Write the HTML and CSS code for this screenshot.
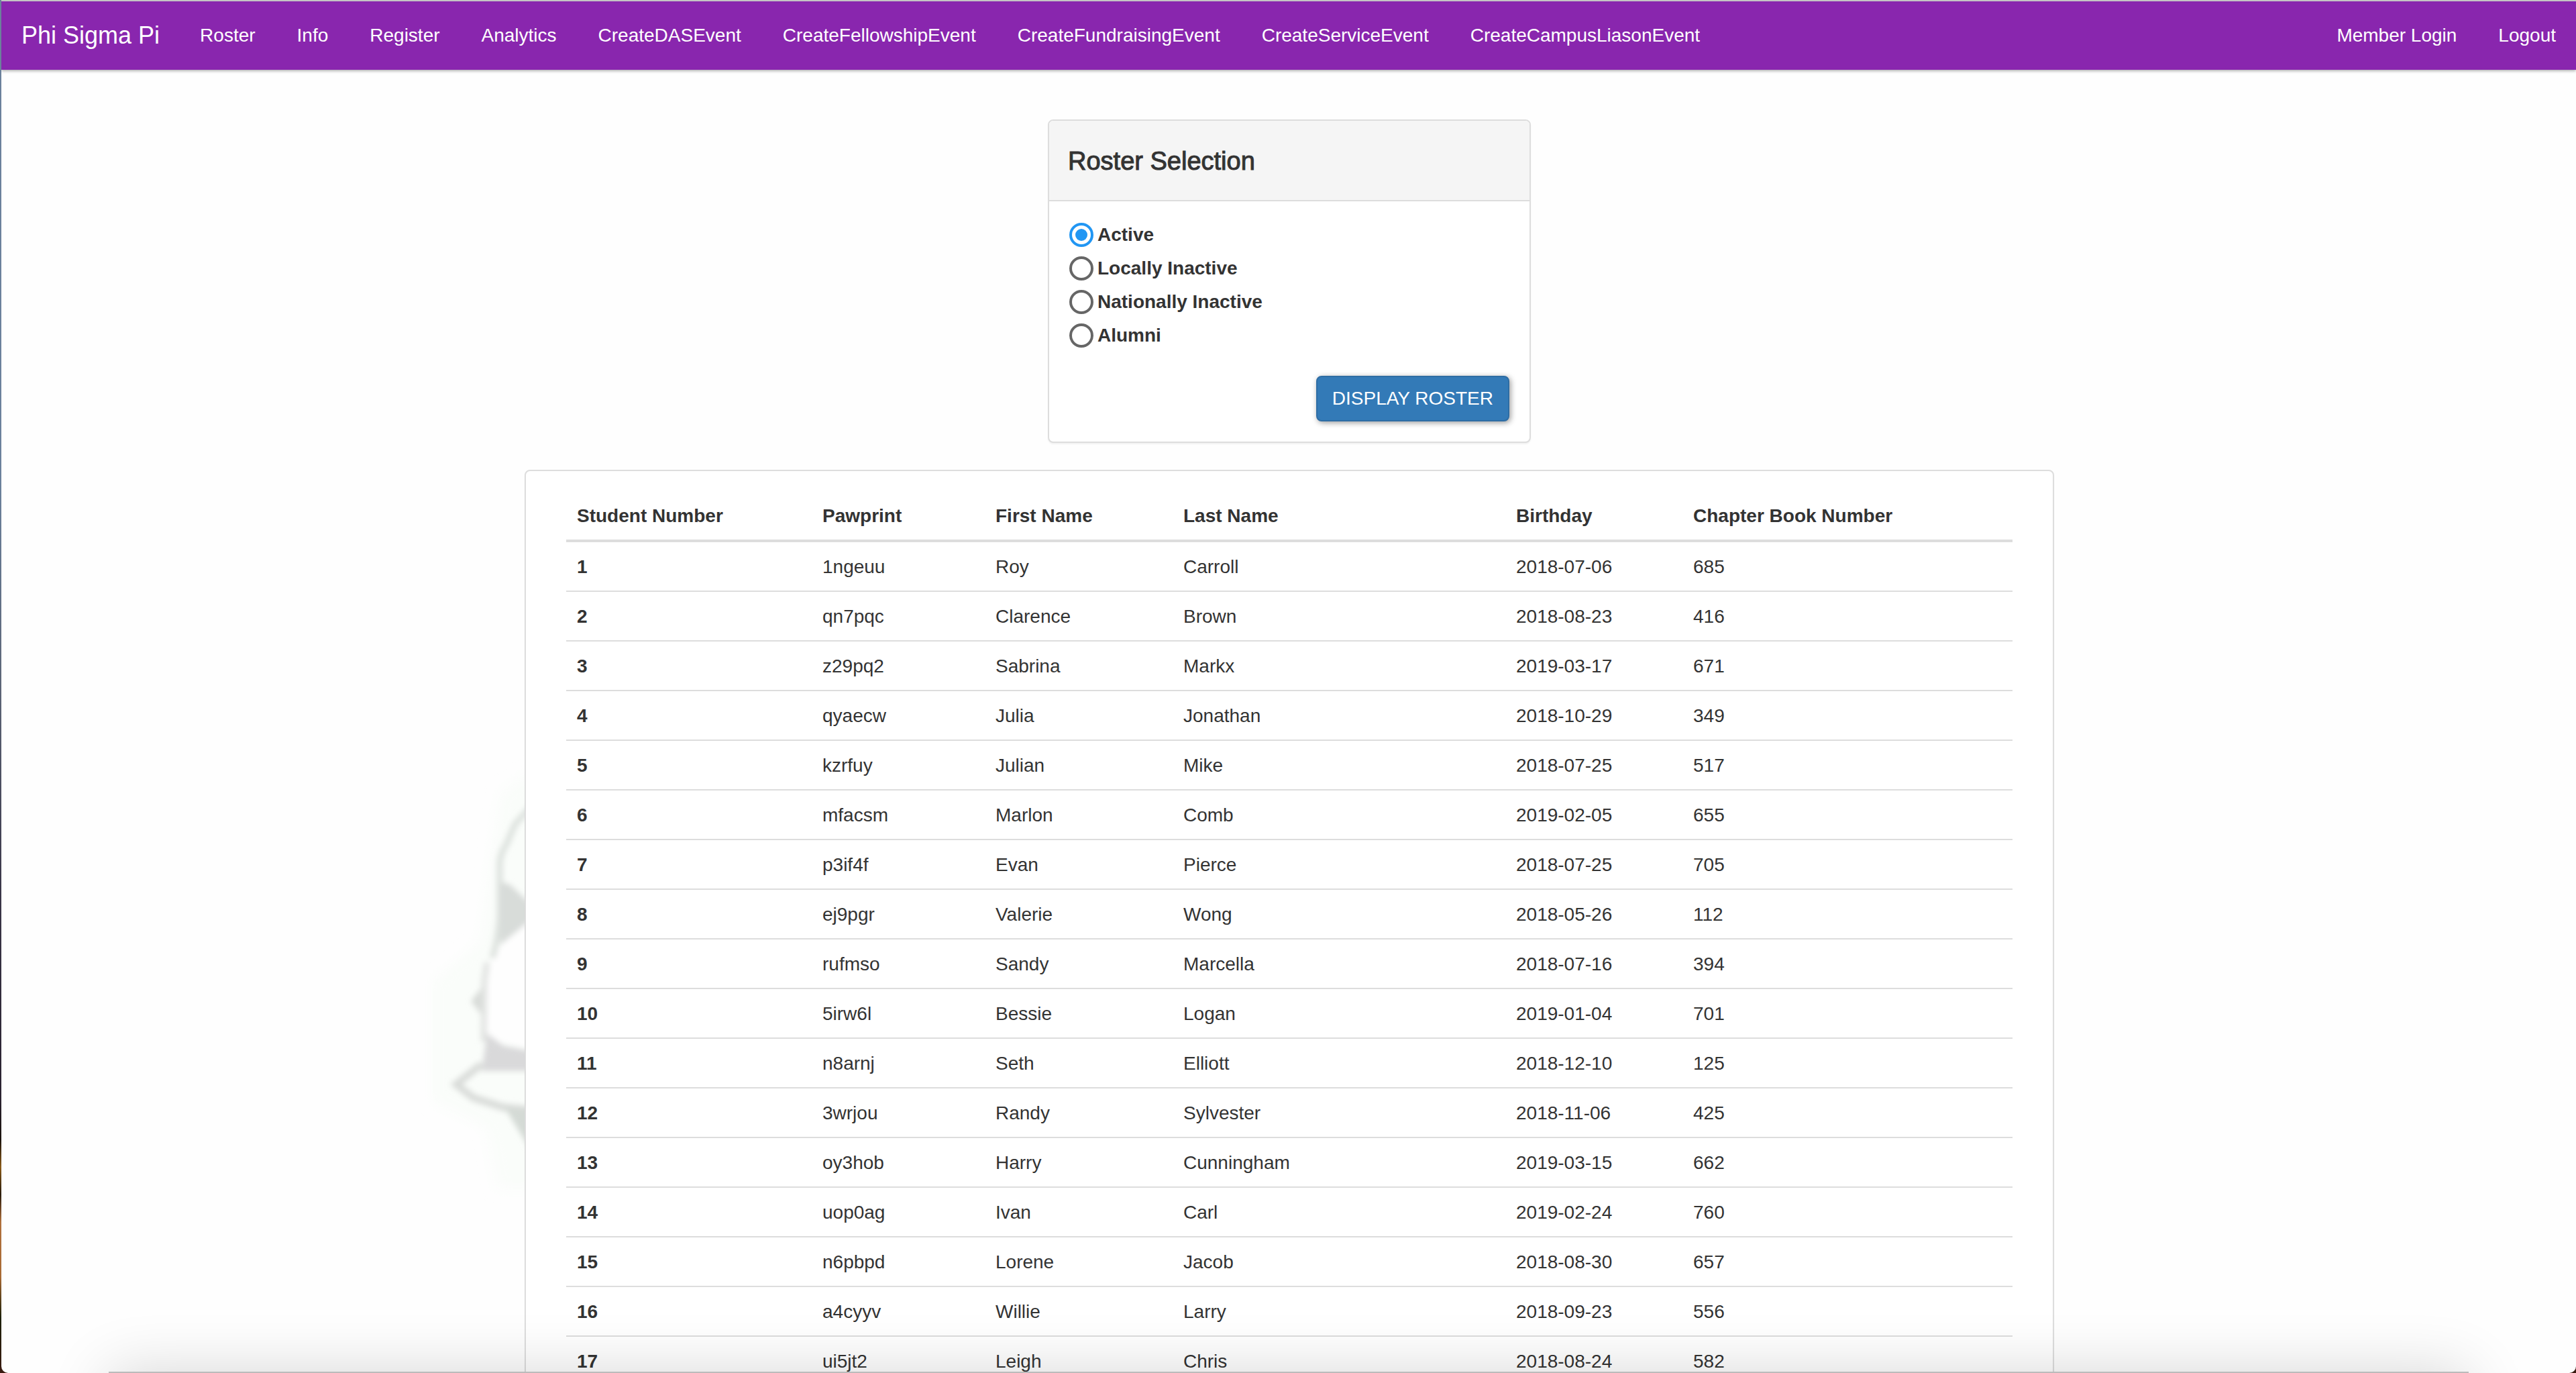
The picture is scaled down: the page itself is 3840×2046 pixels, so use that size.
FILE: index.html
```html
<!DOCTYPE html>
<html lang="en">
<head>
<meta charset="utf-8">
<title>Phi Sigma Pi</title>
<link rel="stylesheet" href="styles.css">
</head>
<body>
<div class="page">
  <header>
    <nav class="navbar">
      <a class="brand" href="#">Phi Sigma Pi</a>
      <ul class="nav-list">
        <li><a href="#">Roster</a></li>
        <li><a href="#">Info</a></li>
        <li><a href="#">Register</a></li>
        <li><a href="#">Analytics</a></li>
        <li><a href="#">CreateDASEvent</a></li>
        <li><a href="#">CreateFellowshipEvent</a></li>
        <li><a href="#">CreateFundraisingEvent</a></li>
        <li><a href="#">CreateServiceEvent</a></li>
        <li><a href="#">CreateCampusLiasonEvent</a></li>
      </ul>
      <ul class="nav-list nav-right">
        <li><a href="#">Member Login</a></li>
        <li><a href="#">Logout</a></li>
      </ul>
    </nav>
  </header>

  <svg class="watermark" viewBox="0 0 200 780" aria-hidden="true">
    <defs>
      <filter id="soft" x="-20%" y="-20%" width="140%" height="140%"><feGaussianBlur stdDeviation="4"/></filter>
      <filter id="haze" x="-40%" y="-30%" width="180%" height="160%"><feGaussianBlur stdDeviation="10"/></filter>
    </defs>
    <g filter="url(#haze)" fill="#fafdfa">
      <path d="M145 100 200 60V690H140L125 600 45 560V380L115 320Z"/>
    </g>
    <g filter="url(#soft)">
      <path d="M124 360 190 270V480L125 465Z" fill="#fefefe"/>
      <path d="M190 122 168 146 155 176Q144 192 145 210V285Q142 320 134 346" fill="none" stroke="#dde2de" stroke-width="9"/>
      <path d="M146 232 160 236 190 264V290L146 326Z" fill="#d8dcd9"/>
      <path d="M126 352 122 380 121 470" fill="none" stroke="#e2e4e2" stroke-width="9"/>
      <path d="M102 410 118 390V430Z" fill="#d8dbd8"/>
      <path d="M126 458 150 476 190 484V514H118Z" fill="#d9d9da"/>
      <path d="M118 504 100 518 80 534 106 554 150 568 190 572" fill="none" stroke="#d9dcd9" stroke-width="11"/>
      <path d="M152 568 190 574V630Z" fill="#d4dad5"/>
    </g>
  </svg>

  <main class="content">
    <form class="panel selector">
      <h1 class="panel-heading">Roster Selection</h1>
      <div class="panel-body">
        <label class="choice"><input type="radio" name="status" value="active" checked>Active</label>
        <label class="choice"><input type="radio" name="status" value="local">Locally Inactive</label>
        <label class="choice"><input type="radio" name="status" value="national">Nationally Inactive</label>
        <label class="choice"><input type="radio" name="status" value="alumni">Alumni</label>
        <div class="actions"><button class="btn" type="button">DISPLAY ROSTER</button></div>
      </div>
    </form>

    <section class="panel roster">
      <table class="table">
        <colgroup>
          <col class="c-number"><col class="c-pawprint"><col class="c-first"><col class="c-last"><col class="c-birthday"><col>
        </colgroup>
        <thead>
          <tr><th scope="col">Student Number</th><th scope="col">Pawprint</th><th scope="col">First Name</th><th scope="col">Last Name</th><th scope="col">Birthday</th><th scope="col">Chapter Book Number</th></tr>
        </thead>
        <tbody>
          <tr><th scope="row">1</th><td>1ngeuu</td><td>Roy</td><td>Carroll</td><td>2018-07-06</td><td>685</td></tr>
          <tr><th scope="row">2</th><td>qn7pqc</td><td>Clarence</td><td>Brown</td><td>2018-08-23</td><td>416</td></tr>
          <tr><th scope="row">3</th><td>z29pq2</td><td>Sabrina</td><td>Markx</td><td>2019-03-17</td><td>671</td></tr>
          <tr><th scope="row">4</th><td>qyaecw</td><td>Julia</td><td>Jonathan</td><td>2018-10-29</td><td>349</td></tr>
          <tr><th scope="row">5</th><td>kzrfuy</td><td>Julian</td><td>Mike</td><td>2018-07-25</td><td>517</td></tr>
          <tr><th scope="row">6</th><td>mfacsm</td><td>Marlon</td><td>Comb</td><td>2019-02-05</td><td>655</td></tr>
          <tr><th scope="row">7</th><td>p3if4f</td><td>Evan</td><td>Pierce</td><td>2018-07-25</td><td>705</td></tr>
          <tr><th scope="row">8</th><td>ej9pgr</td><td>Valerie</td><td>Wong</td><td>2018-05-26</td><td>112</td></tr>
          <tr><th scope="row">9</th><td>rufmso</td><td>Sandy</td><td>Marcella</td><td>2018-07-16</td><td>394</td></tr>
          <tr><th scope="row">10</th><td>5irw6l</td><td>Bessie</td><td>Logan</td><td>2019-01-04</td><td>701</td></tr>
          <tr><th scope="row">11</th><td>n8arnj</td><td>Seth</td><td>Elliott</td><td>2018-12-10</td><td>125</td></tr>
          <tr><th scope="row">12</th><td>3wrjou</td><td>Randy</td><td>Sylvester</td><td>2018-11-06</td><td>425</td></tr>
          <tr><th scope="row">13</th><td>oy3hob</td><td>Harry</td><td>Cunningham</td><td>2019-03-15</td><td>662</td></tr>
          <tr><th scope="row">14</th><td>uop0ag</td><td>Ivan</td><td>Carl</td><td>2019-02-24</td><td>760</td></tr>
          <tr><th scope="row">15</th><td>n6pbpd</td><td>Lorene</td><td>Jacob</td><td>2018-08-30</td><td>657</td></tr>
          <tr><th scope="row">16</th><td>a4cyyv</td><td>Willie</td><td>Larry</td><td>2018-09-23</td><td>556</td></tr>
          <tr><th scope="row">17</th><td>ui5jt2</td><td>Leigh</td><td>Chris</td><td>2018-08-24</td><td>582</td></tr>
        </tbody>
      </table>
    </section>
  </main>
  <div class="dock-shadow"></div>
</div>
</body>
</html>
```
FILE: styles.css
```css
* { box-sizing: border-box; }

html {
  height: 100%;
  background: linear-gradient(#6b819c 0%, #6b819c 35%, #5c6577 50%, #3a3648 65%, #2a2230 80%, #1a120c 83%, #8a5a18 85%, #2a1c0c 87%, #b0703c 89%, #a86a34 93%, #1c2008 96%, #3a1a10 100%);
}

body {
  height: 100%;
  margin: 0;
  padding-left: 2px;
  overflow: hidden;
  color: #333;
  font: 28px/40px "Liberation Sans", Arial, sans-serif;
}

.page {
  position: relative;
  height: 100%;
  overflow: hidden;
  border-top: 2px solid #c4c4c4;
  border-radius: 0 0 10px 10px;
  background: #fefefe;
}

.navbar {
  position: relative;
  display: flex;
  align-items: center;
  height: 102px;
  background: #8926ae;
  box-shadow: 0 2px 4px rgba(0, 0, 0, .3);
}

.navbar a {
  display: block;
  padding: 30px;
  color: #fff;
  text-decoration: none;
  white-space: nowrap;
}

.navbar .brand { font-size: 36px; }

.nav-list {
  display: flex;
  gap: 2px;
  margin: 0;
  padding: 0;
  list-style: none;
}

.nav-right { margin-left: auto; }

.watermark {
  position: absolute;
  top: 1080px;
  left: calc(50% - 1321px);
  width: 200px;
  height: 780px;
}

.content {
  position: relative;
  display: flex;
  flex-direction: column;
  align-items: center;
  gap: 40px;
  padding: 74px 30px 0 32px;
}

.panel {
  width: 100%;
  border: 2px solid #ddd;
  border-radius: 8px;
  background: #fff;
  box-shadow: 0 2px 2px rgba(0, 0, 0, .05);
}

.selector { max-width: 720px; }

.panel-heading {
  margin: 0;
  padding: 39px 28px 37px;
  border-bottom: 2px solid #ddd;
  border-radius: 6px 6px 0 0;
  background: #f5f5f5;
  font-size: 38px;
  font-weight: 400;
  line-height: 42px;
  -webkit-text-stroke: 1px #333;
}

.panel-body { padding: 30px; }

.choice {
  display: flex;
  align-items: center;
  gap: 6px;
  margin-bottom: 10px;
  font-weight: 700;
}

.choice input {
  appearance: none;
  display: grid;
  place-content: center;
  width: 36px;
  height: 36px;
  margin: 0;
  border: 4px solid #666;
  border-radius: 50%;
}

.choice input:checked { border-color: #2196f3; }

.choice input:checked::before {
  content: "";
  width: 18px;
  height: 18px;
  border-radius: 50%;
  background: #2196f3;
}

.actions {
  display: flex;
  justify-content: flex-end;
  margin-top: 40px;
}

.btn {
  padding: 12px 22px;
  border: 2px solid #2e6da4;
  border-radius: 8px;
  background: #337ab7;
  box-shadow: 2px 2px 8px rgba(0, 0, 0, .4);
  color: #fff;
  font: inherit;
}

.roster {
  max-width: 2280px;
  padding: 30px 60px;
}

.table {
  width: 100%;
  border-spacing: 0;
  table-layout: fixed;
}

.table th,
.table td {
  padding: 17px 16px 15px;
  border-top: 2px solid #ddd;
  text-align: left;
}

.table thead th {
  border-top: 0;
  border-bottom: 4px solid #ddd;
}

.table tbody tr:first-child > * { border-top: 0; }

.c-number { width: 366px; }
.c-pawprint { width: 258px; }
.c-first { width: 280px; }
.c-last { width: 496px; }
.c-birthday { width: 264px; }

.dock-shadow {
  position: absolute;
  right: 160px;
  bottom: -198px;
  left: 160px;
  height: 200px;
  border-top: 2px solid #bbb;
  box-shadow: 0 0 90px rgba(0, 0, 0, .16);
}
```
